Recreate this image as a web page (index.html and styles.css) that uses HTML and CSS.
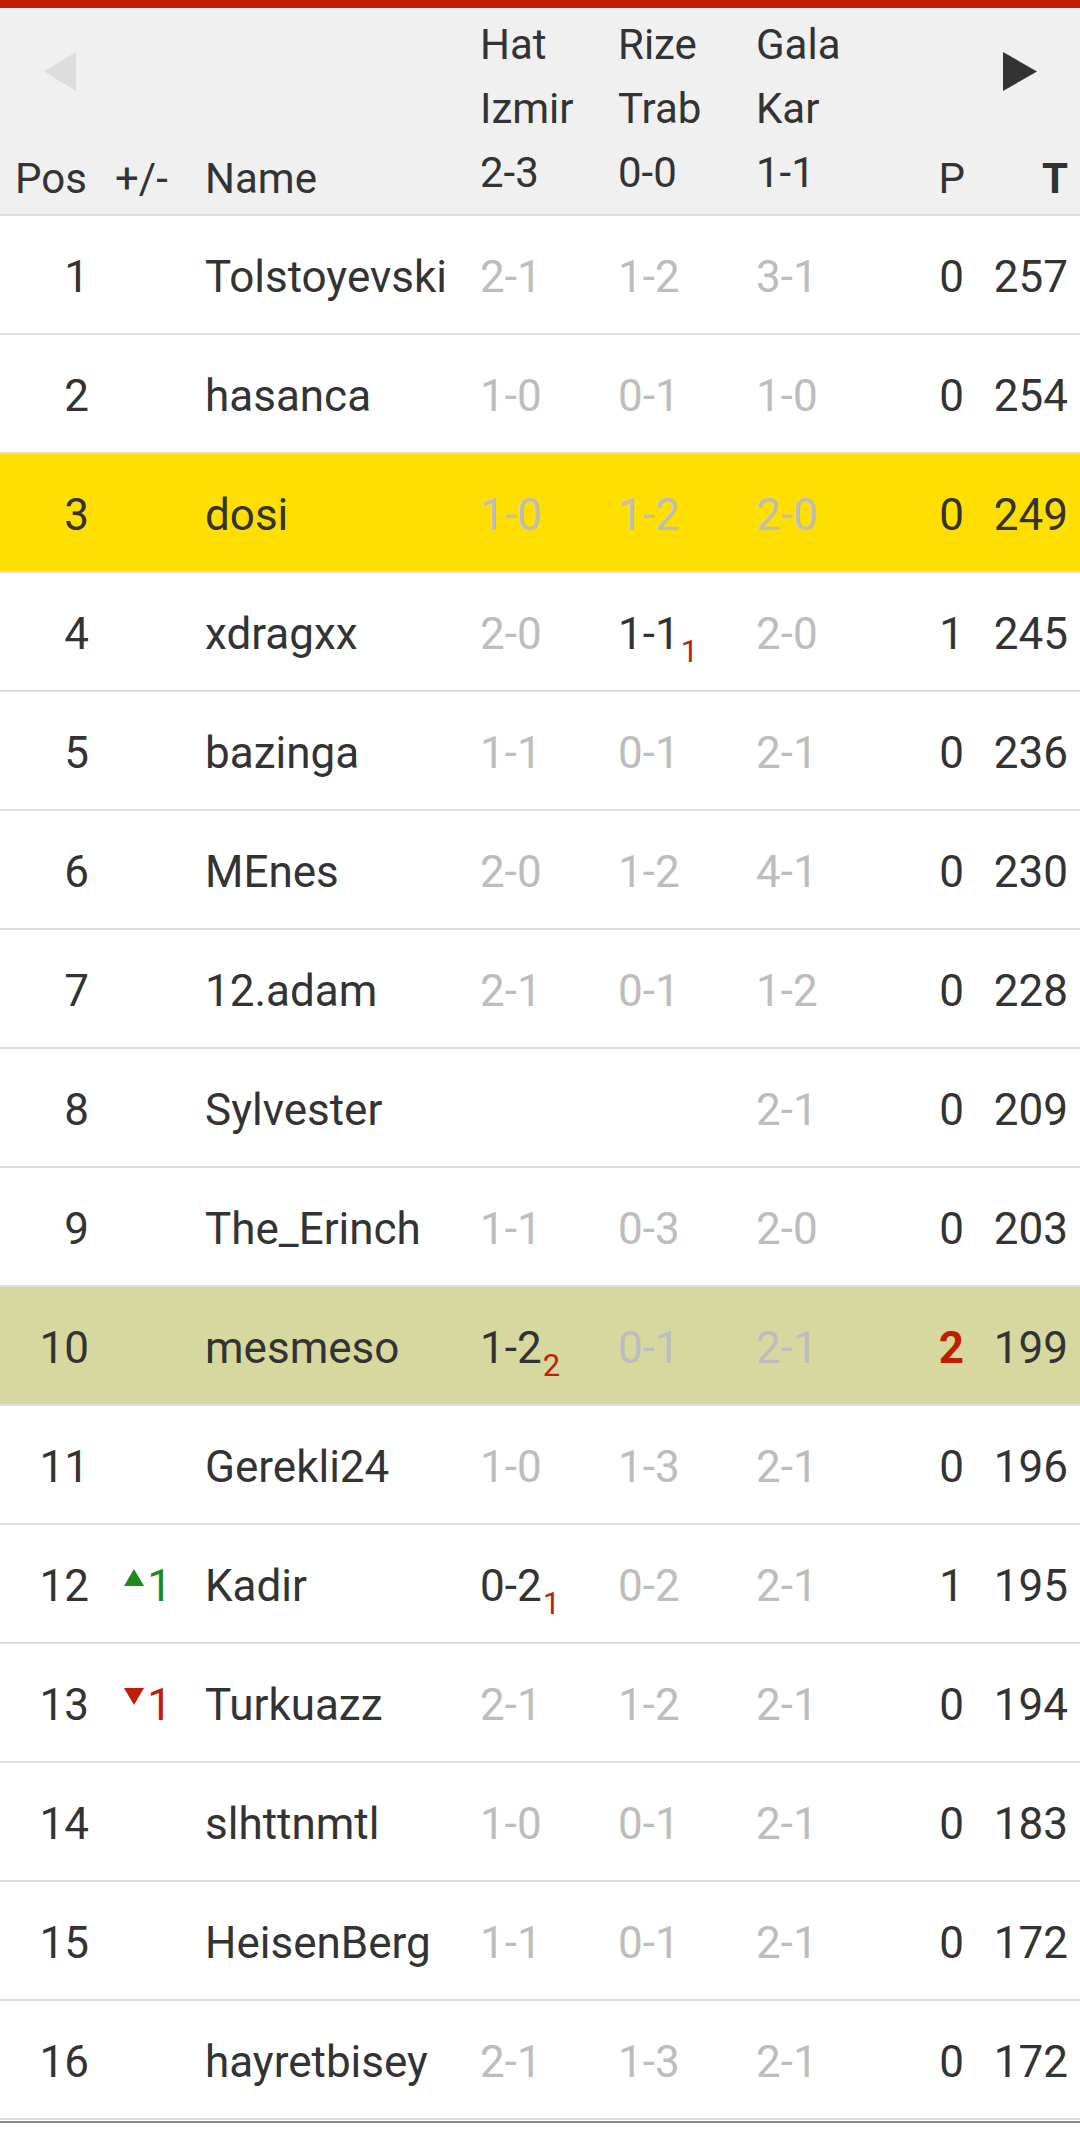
FILE: index.html
```html
<!DOCTYPE html>
<html lang="tr">
<head>
<meta charset="utf-8">
<title>Puan Durumu</title>
<link rel="stylesheet" href="styles.css">
</head>
<body>
<div class="topbar"></div>
<div class="board">
  <div class="head">
    <div class="h-cell h-pos">
      <svg class="arrow arrow-left" width="32" height="39" viewBox="0 0 32 39"><polygon points="32,0 32,39 0,19.5" fill="#dddddd"/></svg>
      <span class="label">Pos</span>
    </div>
    <div class="h-cell h-chg"><span class="label">+/-</span></div>
    <div class="h-cell h-name"><span class="label">Name</span></div>
    <div class="h-match"><span>Hat</span><span>Izmir</span><span>2-3</span></div>
    <div class="h-match"><span>Rize</span><span>Trab</span><span>0-0</span></div>
    <div class="h-match"><span>Gala</span><span>Kar</span><span>1-1</span></div>
    <div class="h-cell h-p"><span class="label">P</span></div>
    <div class="h-cell h-t">
      <svg class="arrow arrow-right" width="34" height="39" viewBox="0 0 34 39"><polygon points="0,0 34,19.5 0,39" fill="#333333"/></svg>
      <span class="label bold">T</span>
    </div>
  </div>

  <div class="row">
    <div class="pos">1</div><div class="chg"></div><div class="name">Tolstoyevski</div>
    <div class="sc">2-1</div><div class="sc">1-2</div><div class="sc">3-1</div>
    <div class="p">0</div><div class="t">257</div>
  </div>
  <div class="row">
    <div class="pos">2</div><div class="chg"></div><div class="name">hasanca</div>
    <div class="sc">1-0</div><div class="sc">0-1</div><div class="sc">1-0</div>
    <div class="p">0</div><div class="t">254</div>
  </div>
  <div class="row row-me">
    <div class="pos">3</div><div class="chg"></div><div class="name">dosi</div>
    <div class="sc">1-0</div><div class="sc">1-2</div><div class="sc">2-0</div>
    <div class="p">0</div><div class="t">249</div>
  </div>
  <div class="row">
    <div class="pos">4</div><div class="chg"></div><div class="name">xdragxx</div>
    <div class="sc">2-0</div><div class="sc live">1-1<sub class="goal">1</sub></div><div class="sc">2-0</div>
    <div class="p">1</div><div class="t">245</div>
  </div>
  <div class="row">
    <div class="pos">5</div><div class="chg"></div><div class="name">bazinga</div>
    <div class="sc">1-1</div><div class="sc">0-1</div><div class="sc">2-1</div>
    <div class="p">0</div><div class="t">236</div>
  </div>
  <div class="row">
    <div class="pos">6</div><div class="chg"></div><div class="name">MEnes</div>
    <div class="sc">2-0</div><div class="sc">1-2</div><div class="sc">4-1</div>
    <div class="p">0</div><div class="t">230</div>
  </div>
  <div class="row">
    <div class="pos">7</div><div class="chg"></div><div class="name">12.adam</div>
    <div class="sc">2-1</div><div class="sc">0-1</div><div class="sc">1-2</div>
    <div class="p">0</div><div class="t">228</div>
  </div>
  <div class="row">
    <div class="pos">8</div><div class="chg"></div><div class="name">Sylvester</div>
    <div class="sc"></div><div class="sc"></div><div class="sc">2-1</div>
    <div class="p">0</div><div class="t">209</div>
  </div>
  <div class="row">
    <div class="pos">9</div><div class="chg"></div><div class="name">The_Erinch</div>
    <div class="sc">1-1</div><div class="sc">0-3</div><div class="sc">2-0</div>
    <div class="p">0</div><div class="t">203</div>
  </div>
  <div class="row row-hl">
    <div class="pos">10</div><div class="chg"></div><div class="name">mesmeso</div>
    <div class="sc live">1-2<sub class="goal">2</sub></div><div class="sc">0-1</div><div class="sc">2-1</div>
    <div class="p p-hot">2</div><div class="t">199</div>
  </div>
  <div class="row">
    <div class="pos">11</div><div class="chg"></div><div class="name">Gerekli24</div>
    <div class="sc">1-0</div><div class="sc">1-3</div><div class="sc">2-1</div>
    <div class="p">0</div><div class="t">196</div>
  </div>
  <div class="row">
    <div class="pos">12</div>
    <div class="chg up"><svg class="tri" width="20" height="17" viewBox="0 0 20 17"><polygon points="10,0 20,17 0,17" fill="currentColor"/></svg>1</div>
    <div class="name">Kadir</div>
    <div class="sc live">0-2<sub class="goal">1</sub></div><div class="sc">0-2</div><div class="sc">2-1</div>
    <div class="p">1</div><div class="t">195</div>
  </div>
  <div class="row">
    <div class="pos">13</div>
    <div class="chg down"><svg class="tri" width="20" height="17" viewBox="0 0 20 17"><polygon points="0,0 20,0 10,17" fill="currentColor"/></svg>1</div>
    <div class="name">Turkuazz</div>
    <div class="sc">2-1</div><div class="sc">1-2</div><div class="sc">2-1</div>
    <div class="p">0</div><div class="t">194</div>
  </div>
  <div class="row">
    <div class="pos">14</div><div class="chg"></div><div class="name">slhttnmtl</div>
    <div class="sc">1-0</div><div class="sc">0-1</div><div class="sc">2-1</div>
    <div class="p">0</div><div class="t">183</div>
  </div>
  <div class="row">
    <div class="pos">15</div><div class="chg"></div><div class="name">HeisenBerg</div>
    <div class="sc">1-1</div><div class="sc">0-1</div><div class="sc">2-1</div>
    <div class="p">0</div><div class="t">172</div>
  </div>
  <div class="row">
    <div class="pos">16</div><div class="chg"></div><div class="name">hayretbisey</div>
    <div class="sc">2-1</div><div class="sc">1-3</div><div class="sc">2-1</div>
    <div class="p">0</div><div class="t">172</div>
  </div>
</div>
<div class="foot"></div>
</body>
</html>
```
FILE: styles.css
```css
* { box-sizing: border-box; }

html, body {
  margin: 0;
  padding: 0;
  background: #ffffff;
}

body {
  font-family: Roboto, "Noto Sans", "Liberation Sans", sans-serif;
  color: #333333;
  width: 1080px;
}

.topbar {
  height: 8px;
  background: #bf1e00;
}

.head,
.row {
  display: grid;
  grid-template-columns: 100px 93px 275px 138px 138px 138px 95px 103px;
}

.head {
  background: #f0f0f0;
  border-bottom: 2px solid #dddddd;
  padding: 5px 0 3px;
  height: 208px;
  font-size: 42px;
  line-height: 64px;
}

.h-cell {
  display: flex;
  flex-direction: column;
  justify-content: flex-end;
}

.h-pos,
.h-chg {
  padding-left: 15px;
}

.h-pos {
  justify-content: space-between;
}

.arrow-left {
  margin-top: 39px;
  margin-left: 29px;
}

.h-name {
  padding-left: 12px;
}

.h-match {
  display: flex;
  flex-direction: column;
  align-self: start;
  padding-left: 12px;
}

.h-p {
  align-items: flex-end;
  padding-right: 12px;
}

.h-t {
  justify-content: space-between;
  align-items: flex-end;
  padding-right: 12px;
}

.arrow-right {
  margin-top: 39px;
  margin-right: 31px;
}

.bold {
  font-weight: 700;
}

.row {
  height: 119px;
  border-bottom: 2px solid #dddddd;
  padding-top: 4px;
  align-items: center;
  font-size: 44px;
  line-height: 52px;
  background: #ffffff;
}

.row-me {
  background: #ffdf00;
}

.row-hl {
  background: #d6d8a0;
}

.pos {
  text-align: right;
  padding-right: 11px;
}

.chg {
  text-align: right;
  padding-right: 21px;
}

.chg .tri {
  vertical-align: 14.3px;
  margin-right: 3px;
}

.up { color: #1e8a1e; }
.down { color: #c01e0c; }

.name {
  padding-left: 12px;
  white-space: nowrap;
}

.sc {
  padding-left: 12px;
  color: #bdbdbd;
  white-space: nowrap;
}

.sc.live {
  color: #333333;
}

.goal {
  font-size: 31px;
  line-height: 0;
  vertical-align: -13px;
  color: #c01e0c;
  margin-left: 1px;
}

.p {
  text-align: right;
  padding-right: 13px;
}

.p-hot {
  font-weight: 700;
  color: #bf1e00;
}

.t {
  text-align: right;
  padding-right: 12px;
}

.foot {
  height: 2px;
  margin-top: 1px;
  background: #8a8a8a;
}
```
